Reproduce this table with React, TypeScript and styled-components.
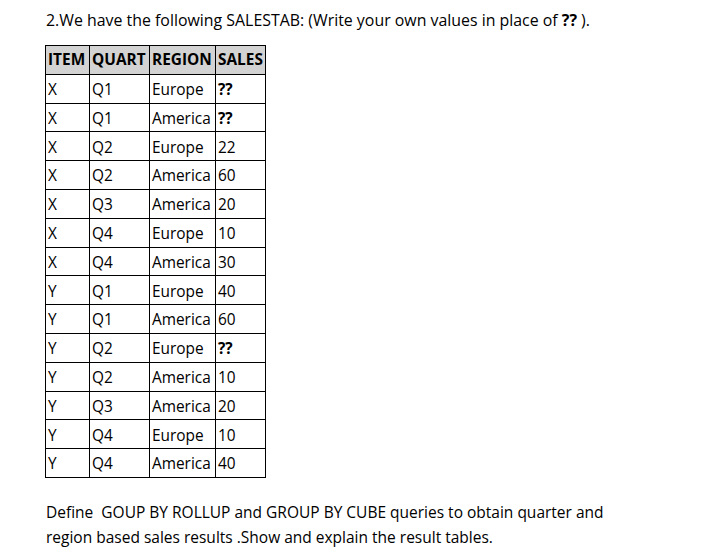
import styled, {createGlobalStyle} from "styled-components";

const GlobalStyle = createGlobalStyle`
  body {
    margin: 0;
    background: #ffffff;
    color: #000000;
    font-family: "Open Sans", "Liberation Sans", sans-serif;
  }
`

const Page = styled.div`
  width: 707px;
  height: 557px;
  padding: 9px 0 0 46px;
  box-sizing: border-box;
  display: flex;
  flex-direction: column;
`

const Title = styled.p`
  margin: 0;
  font-size: 15.9px;
  line-height: 22px;
  white-space: nowrap;
`

const Table = styled.table`
  margin-top: 14px;
  margin-left: -1px;
  width: 220px;
  border-collapse: collapse;
  font-size: 15.4px;
  table-layout: fixed;
`

const HeadCell = styled.th<{ $w: number }>`
  width: ${p => p.$w}px;
  height: 28.8px;
  padding: 0 2px;
  box-sizing: border-box;
  background: #d3d3d3;
  border: 1.5px solid #000;
  font-weight: 700;
  text-align: left;
  line-height: 1;
  white-space: nowrap;
  overflow: visible;
`

const Cell = styled.td<{ $bold?: boolean }>`
  height: 28.8px;
  padding: 2px 2px 0;
  box-sizing: border-box;
  border: 1.5px solid #000;
  font-weight: ${p => (p.$bold ? 700 : 400)};
  line-height: 1;
  white-space: nowrap;
  overflow: visible;
`

const Question = styled.p`
  margin: 22px 0 0;
  font-size: 15.5px;
  line-height: 25px;
  width: 600px;
`

const rows: [string, string, string, string][] = [
    ["X", "Q1", "Europe", "??"],
    ["X", "Q1", "America", "??"],
    ["X", "Q2", "Europe", "22"],
    ["X", "Q2", "America", "60"],
    ["X", "Q3", "America", "20"],
    ["X", "Q4", "Europe", "10"],
    ["X", "Q4", "America", "30"],
    ["Y", "Q1", "Europe", "40"],
    ["Y", "Q1", "America", "60"],
    ["Y", "Q2", "Europe", "??"],
    ["Y", "Q2", "America", "10"],
    ["Y", "Q3", "America", "20"],
    ["Y", "Q4", "Europe", "10"],
    ["Y", "Q4", "America", "40"],
];

const App = () => {
    return (
        <>
            <GlobalStyle/>
            <Page>
                <Title>2.We have the following SALESTAB: (Write your own values in place of <b>??</b> ).</Title>
                <Table>
                    <thead>
                    <tr>
                        <HeadCell $w={44}>ITEM</HeadCell>
                        <HeadCell $w={60}>QUART</HeadCell>
                        <HeadCell $w={66}>REGION</HeadCell>
                        <HeadCell $w={50}>SALES</HeadCell>
                    </tr>
                    </thead>
                    <tbody>
                    {rows.map((r, i) => (
                        <tr key={i}>
                            <Cell>{r[0]}</Cell>
                            <Cell>{r[1]}</Cell>
                            <Cell>{r[2]}</Cell>
                            <Cell $bold={r[3] === "??"}>{r[3]}</Cell>
                        </tr>
                    ))}
                    </tbody>
                </Table>
                <Question>
                    Define&nbsp; GOUP BY ROLLUP and GROUP BY CUBE queries to obtain quarter and region based sales results .Show and explain the result tables.
                </Question>
            </Page>
        </>
    );
}

export default App;
